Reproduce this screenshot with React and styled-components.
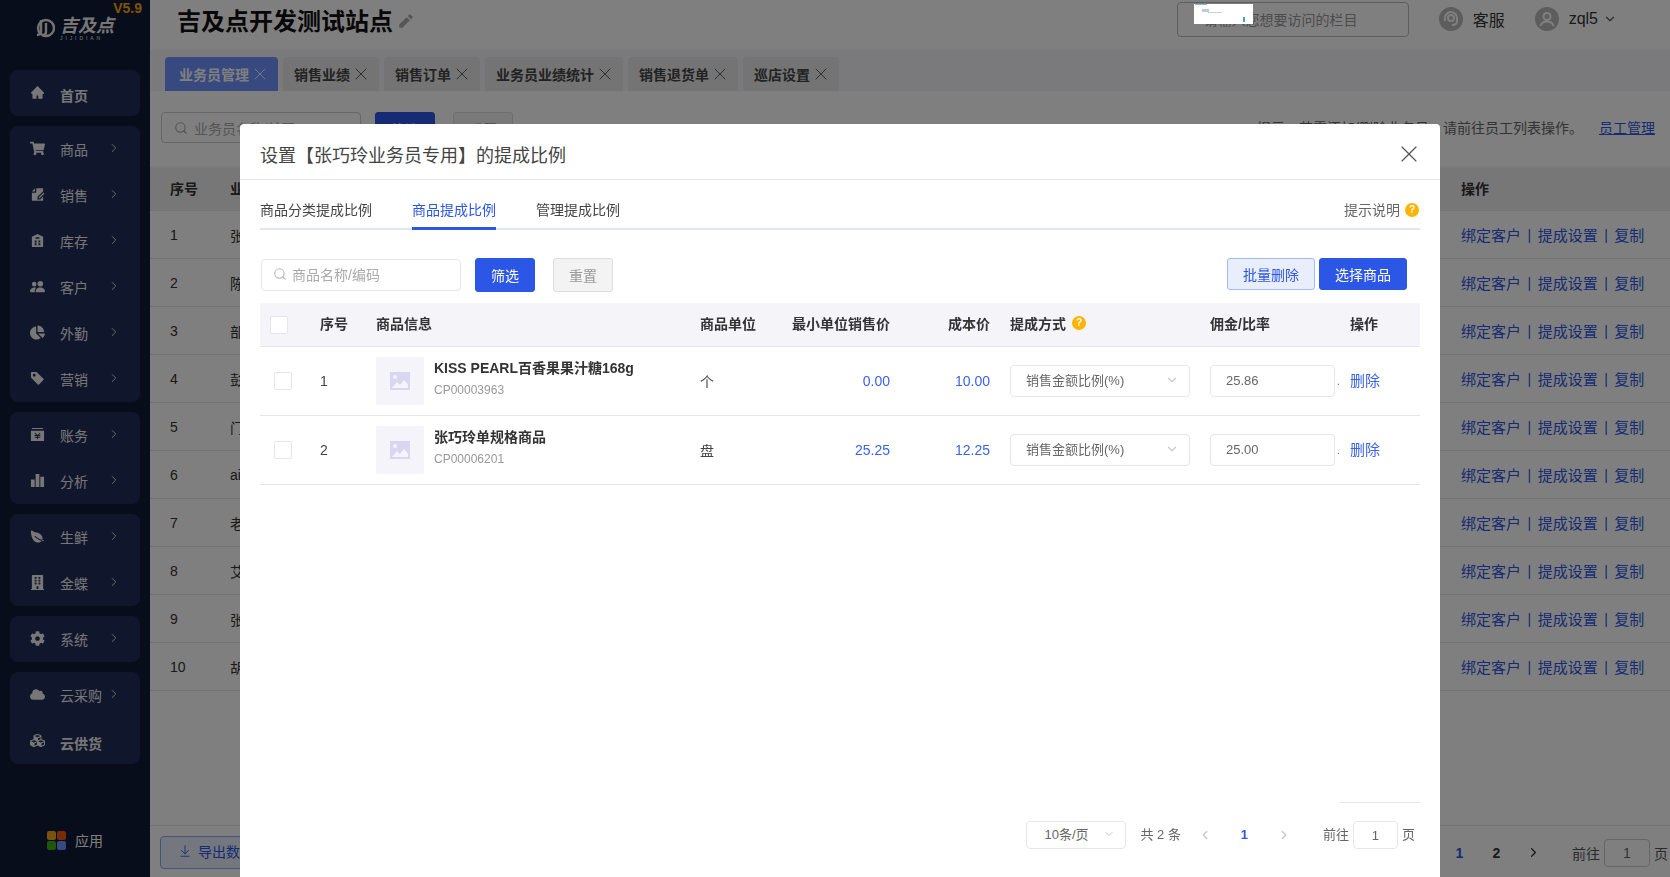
import React from 'react';
import styled, { createGlobalStyle } from 'styled-components';
import { AiFillHome } from 'react-icons/ai';
import { FaShoppingCart, FaChartPie, FaCog, FaCubes, FaCloud, FaBuilding } from 'react-icons/fa';
import { RiFileEditFill, RiPencilFill } from 'react-icons/ri';
import { BsPeopleFill, BsTagFill } from 'react-icons/bs';
import { IoLeaf } from 'react-icons/io5';
import { ChevronRight, ChevronLeft, ChevronDown, X, Search, ArrowDownToLine } from 'lucide-react';

const BLUE = '#2c56e6';
const LINE = '#e3e6ee';

const GlobalStyle = createGlobalStyle`
  html, body {
    margin: 0;
    padding: 0;
    height: 100%;
    overflow: hidden;
    background: #fff;
    font-family: "Liberation Sans", "Noto Sans CJK SC", sans-serif;
    font-size: 14px;
    color: #333;
  }
  * { box-sizing: border-box; }
`;

const Page = styled.div`
  display: flex;
  width: 1670px;
  height: 877px;
  overflow: hidden;
`;

/* sidebar */
const Sidebar = styled.aside`
  flex: none;
  width: 150px;
  display: flex;
  flex-flow: column;
  background: #0f1a34;
  padding: 0 10px;
`;

const Brand = styled.div`
  position: relative;
  height: 70px;
  display: flex;
  align-items: flex-start;
  padding: 18px 0 0 25px;
  gap: 5px;
`;

const Version = styled.span`
  position: absolute;
  top: 0;
  right: -2px;
  font-size: 14px;
  line-height: 16px;
  font-weight: 700;
  color: #ffa60f;
`;

const BrandName = styled.div`
  display: flex;
  flex-flow: column;
  color: #eee;
  font-size: 18px;
  line-height: 17px;
  font-weight: 700;
  font-style: italic;

  small {
    font-size: 5px;
    line-height: 6px;
    font-weight: 400;
    font-style: normal;
    letter-spacing: 2.9px;
  }
`;

const NavGroup = styled.nav`
  background: #202d59;
  border-radius: 8px;
  margin-bottom: 10px;
`;

const NavItem = styled.a`
  height: 46px;
  display: flex;
  align-items: center;
  padding-left: 20px;
  color: #eee;
  font-size: 14px;
  font-weight: ${({ $bold }) => ($bold ? 700 : 400)};

  > svg:first-child {
    flex: none;
    width: 15px;
    height: 15px;
    margin: -2px 15px 0 0;
    fill: #eee;
  }
`;

const NavLabel = styled.span`
  width: 47px;
  white-space: nowrap;
  margin-top: ${({ $bold }) => ($bold ? 3 : 0)}px;
`;

const NavChevron = styled(ChevronRight)`
  margin-top: -3px;
`;

const AppsEntry = styled.div`
  margin-top: auto;
  height: 68px;
  padding: 0 0 6px 37px;
  display: flex;
  align-items: center;
  gap: 9px;
  color: #fff;
`;

const AppsIcon = styled.div`
  display: grid;
  grid-template-columns: 9px 9px;
  gap: 1px;
`;

const AppsDot = styled.i`
  height: 9px;
  border-radius: 2px;
  background: ${({ $color }) => $color};
`;

/* page behind the dialog */
const Main = styled.main`
  flex: 1;
  min-width: 0;
  display: flex;
  flex-flow: column;
  background: #fff;
`;

const TopBar = styled.header`
  flex: none;
  height: 50px;
  display: flex;
  align-items: center;
  padding: 0 0 12px 27px;
`;

const SiteTitle = styled.h1`
  margin: 6px 4px 0 0;
  font-size: 24px;
  line-height: 30px;
  font-weight: 700;
  color: #111;
`;

const EditIcon = styled(RiPencilFill)`
  margin-top: 3px;
`;

const TopSearch = styled.div`
  margin-left: auto;
  width: 232px;
  height: 35px;
  padding-left: 26px;
  display: flex;
  align-items: center;
  border: 1px solid #bbb;
  border-radius: 4px;
  color: #999;
  font-size: 14px;
  white-space: nowrap;
`;

const TopLink = styled.div`
  display: flex;
  align-items: center;
  gap: 10px;
  margin-left: 30px;
  color: #333;
  font-size: 16px;
`;

const TopChevron = styled(ChevronDown)`
  margin: 0 53px 0 5px;
`;

const RoundIcon = styled.span`
  width: 24px;
  height: 24px;
  border-radius: 50%;
  background: #bbb;
  display: flex;
  align-items: center;
  justify-content: center;
`;

const TabStrip = styled.div`
  flex: none;
  height: 41px;
  padding: 7px 0 0 15px;
  display: flex;
  gap: 5px;
  background: #f4f4f8;
`;

const Tab = styled.div`
  height: 34px;
  padding: 0 8px 0 ${({ $active }) => ($active ? 14 : 11)}px;
  display: flex;
  align-items: center;
  gap: 1px;
  border-radius: 4px 4px 0 0;
  font-weight: 700;
  font-size: 14px;
  white-space: nowrap;
  background: ${({ $active }) => ($active ? '#6f93ff' : '#e8e8e8')};
  color: ${({ $active }) => ($active ? '#fff' : '#444')};
`;

const FilterBar = styled.div`
  flex: none;
  height: 76px;
  padding: 21px 15px 0 11px;
  display: flex;
  align-items: flex-start;
`;

const BackSearch = styled.div`
  width: 200px;
  height: 31px;
  margin-right: 14px;
  padding-left: 12px;
  display: flex;
  align-items: center;
  gap: 6px;
  border: 1px solid #ccc;
  border-radius: 4px;
  color: #aaa;
`;

const Notice = styled.div`
  margin: 5px 0 0 auto;
  color: #666;
  white-space: nowrap;
`;

const NoticeLink = styled.a`
  margin-left: 16px;
  color: ${BLUE};
  text-decoration: underline;
`;

const BackRow = styled.div`
  flex: none;
  height: ${({ $head }) => ($head ? 44 : 48)}px;
  padding: 0 23px ${({ $head }) => ($head ? 2 : 0)}px 20px;
  display: grid;
  grid-template-columns: 60px 1fr 186px;
  align-items: center;
  border-bottom: 1px solid #e6e6e6;
  background: ${({ $head }) => ($head ? '#eeeeef' : '#fff')};
  font-weight: ${({ $head }) => ($head ? 700 : 400)};
  font-size: 14px;
  color: #333;
`;

const BackLinks = styled.div`
  display: flex;
  align-items: center;
  color: ${BLUE};
  font-size: 15px;
  font-weight: 400;
  white-space: nowrap;
`;

const BackPipe = styled.span`
  margin: 0 6.500px;
  font-size: 14px;
`;

const BackFooter = styled.div`
  margin-top: auto;
  flex: none;
  height: 52px;
  border-top: 1px solid #e6e6e6;
  padding: 10px 2px 0 10px;
  display: flex;
  align-items: flex-start;
`;

const ExportButton = styled.div`
  width: 120px;
  height: 33px;
  padding: 0 0 3px 17px;
  display: flex;
  align-items: center;
  gap: 6px;
  border: 1px solid #8ba5f5;
  border-radius: 4px;
  background: #e9eefc;
  color: ${BLUE};
  white-space: nowrap;
`;

const BackPager = styled.div`
  margin-left: auto;
  display: flex;
  align-items: center;
  height: 33px;
  color: #555;
  font-size: 14px;
`;

const PagerNum = styled.b`
  width: 37px;
  text-align: center;
  color: ${({ $on }) => ($on ? BLUE : '#333')};
`;

const BackArrow = styled(ChevronRight)`
  margin: 0 31px 0 11px;
`;

/* dialog */
const Overlay = styled.div`
  position: fixed;
  inset: 0;
  background: rgba(0, 0, 0, 0.5);
`;

const Thumb = styled.div`
  position: fixed;
  left: 1194px;
  top: 4px;
  width: 59px;
  height: 20px;
  background:
    linear-gradient(#8ab4e8, #8ab4e8) 1px 0 / 12px 1px no-repeat,
    linear-gradient(#bcd, #bcd) 8px 5px / 7px 3px no-repeat,
    linear-gradient(#4a9, #4a9) 49px 13px / 2px 5px no-repeat,
    linear-gradient(#c9d0da, #c9d0da) 14px 8px / 14px 1px no-repeat,
    #fff;
`;

const Dialog = styled.section`
  position: fixed;
  left: 240px;
  top: 124px;
  bottom: 0;
  width: 1200px;
  display: flex;
  flex-flow: column;
  background: #fff;
  border-radius: 4px 4px 0 0;
`;

const DialogHead = styled.header`
  flex: none;
  height: 56px;
  padding: 0 17px 0 20px;
  display: flex;
  align-items: center;
  justify-content: space-between;
  border-bottom: 1px solid ${LINE};
`;

const DialogTitle = styled.h2`
  margin: 8px 0 0;
  font-size: 18px;
  line-height: 24px;
  font-weight: 400;
  color: #444;
`;

const DialogClose = styled(X)`
  margin-top: 4px;
`;

const DialogBody = styled.div`
  flex: 1;
  min-height: 0;
  padding: 0 20px;
  display: flex;
  flex-flow: column;
`;

const TabBar = styled.div`
  flex: none;
  height: 50px;
  display: flex;
  align-items: stretch;
  gap: 40px;
  border-bottom: 2px solid ${LINE};
`;

const TabItem = styled.div`
  padding-top: 20px;
  margin-bottom: -2px;
  font-size: 14px;
  line-height: 20px;
  color: ${({ $active }) => ($active ? BLUE : '#444')};
  border-bottom: 3px solid ${({ $active }) => ($active ? BLUE : 'transparent')};
`;

const TabHint = styled.div`
  margin-left: auto;
  padding: 20px 1px 0 0;
  display: flex;
  align-items: flex-start;
  gap: 5px;
  line-height: 20px;
  color: #666;
`;

const Help = styled.span`
  width: 14px;
  height: 14px;
  margin-top: ${({ $flat }) => ($flat ? 0 : 3)}px;
  border-radius: 50%;
  background: #ffb400;
  color: #fff;
  font-size: 10px;
  line-height: 14px;
  font-weight: 700;
  text-align: center;
`;

const Toolbar = styled.div`
  flex: none;
  height: 45px;
  margin-top: 28px;
  padding: 0 13px 0 1px;
  display: flex;
  align-items: flex-start;
`;

const SearchBox = styled.div`
  width: 200px;
  height: 32px;
  margin: 1px 14px 0 0;
  padding: 0 0 3px 11px;
  display: flex;
  align-items: center;
  gap: 5px;
  border: 1px solid ${LINE};
  border-radius: 4px;
  color: #aaa;
  font-size: 14px;
`;

const Button = styled.button`
  width: ${({ $w }) => $w}px;
  height: ${({ $h }) => $h || 34}px;
  margin-left: ${({ $ml }) => $ml || 0}px;
  padding: 0;
  border-radius: 3px;
  font: inherit;
  font-size: 14px;
  border: 1px solid ${({ $kind }) =>
    $kind === 'primary' ? BLUE : $kind === 'soft' ? '#a5b8f4' : '#ddd'};
  background: ${({ $kind }) =>
    $kind === 'primary' ? BLUE : $kind === 'soft' ? '#e9eefc' : '#f3f3f3'};
  color: ${({ $kind }) =>
    $kind === 'primary' ? '#fff' : $kind === 'soft' ? BLUE : '#999'};
`;

const PushedButton = styled(Button)`
  margin-left: auto;
`;

const Row = styled.div`
  flex: none;
  display: grid;
  grid-template-columns: 60px 56px 324px 70px 120px 100px 220px 140px 70px;
  align-items: center;
  height: ${({ $head }) => ($head ? 44 : 69)}px;
  padding-bottom: ${({ $head }) => ($head ? 4 : 0)}px;
  background: ${({ $head }) => ($head ? '#f4f4f9' : '#fff')};
  border-bottom: 1px solid ${LINE};
  font-weight: ${({ $head }) => ($head ? 700 : 400)};
  color: ${({ $head }) => ($head ? '#333' : '#444')};
`;

const Check = styled.span`
  display: block;
  width: 18px;
  height: 18px;
  margin: ${({ $head }) => ($head ? '4px 0 0 10px' : '0 0 0 14px')};
  border: 1px solid ${LINE};
  border-radius: 2px;
  background: #fff;
`;

const Money = styled.span`
  text-align: right;
  color: ${({ $plain }) => ($plain ? '#333' : '#3b63e8')};
`;

const ProductCell = styled.div`
  display: flex;
  align-items: center;
  gap: 10px;
`;

const ProductThumb = styled.div`
  flex: none;
  width: 48px;
  height: 48px;
  border-radius: 2px;
  background: #f5f4fb;
  display: flex;
  align-items: center;
  justify-content: center;
`;

const ProductText = styled.div`
  padding-bottom: 6px;
`;

const ProductName = styled.div`
  font-size: 14px;
  line-height: 20px;
  font-weight: 700;
  color: #333;
`;

const ProductCode = styled.div`
  margin-top: 4px;
  font-size: 12px;
  line-height: 16px;
  color: #999;
`;

const ModeCell = styled.div`
  display: flex;
  align-items: center;
  gap: 6px;
  padding-left: 20px;
`;

const SelectBox = styled.div`
  width: ${({ $w }) => $w}px;
  height: ${({ $h }) => $h || 32}px;
  padding: 0 10px 3px ${({ $pl }) => $pl || 15}px;
  display: flex;
  align-items: center;
  justify-content: space-between;
  border: 1px solid ${LINE};
  border-radius: 4px;
  background: #fff;
  color: #666;
  font-size: 13px;
`;

const RateCell = styled.div`
  display: flex;
  align-items: center;

  &::after {
    content: '.';
    margin: 0 0 0 2px;
    font-size: 10px;
    color: #666;
  }
`;

const RateInput = styled.div`
  width: 125px;
  height: 32px;
  padding: 0 0 1px 15px;
  display: flex;
  align-items: center;
  border: 1px solid ${LINE};
  border-radius: 4px;
  color: #666;
  font-size: 13px;
`;

const RemoveLink = styled.a`
  color: #3b63e8;
  font-size: 15px;
  line-height: 20px;
`;

const DialogFooter = styled.div`
  margin-top: auto;
  flex: none;
  height: 75px;
  position: relative;
  padding: 19px 5px 0 0;
  display: flex;
  align-items: flex-start;
  justify-content: flex-end;
  color: #666;
  font-size: 13px;

  &::before {
    content: '';
    position: absolute;
    top: 0;
    right: 0;
    width: 80px;
    border-top: 1px solid ${LINE};
  }
`;

const PagerText = styled.span`
  line-height: 28px;
  white-space: nowrap;
  margin: ${({ $m }) => $m || 0};
`;

const PageInput = styled.div`
  width: ${({ $w }) => $w || 45}px;
  height: 28px;
  margin: 0 4px;
  display: flex;
  align-items: center;
  justify-content: center;
  border: 1px solid ${({ $dim }) => ($dim ? '#ccc' : LINE)};
  border-radius: 4px;
  color: #666;
`;

const PagerArrow = styled.span`
  height: 28px;
  display: flex;
  align-items: center;
  color: #c4c8d4;
`;

const PagerActive = styled.b`
  width: 65px;
  line-height: 28px;
  text-align: center;
  color: ${BLUE};
`;

const StoreIcon = () => (
  <svg viewBox="0 0 16 16"><path d="M8 1 14 4v11H2V4zM5 8v2h2V8zm4 0v2h2V8zM5 11v2h2v-2zm4 0v2h2v-2zM6 4.5v1.5h4V4.500z" fillRule="evenodd" /></svg>
);
const LedgerIcon = () => (
  <svg viewBox="0 0 16 16"><path d="M2 1h12v1H2zM1 4h14v11H1zM5.500 6 8 8.500 10.500 6l.7.700-1.900 1.800h1.700v1H8.500v1H11v1H8.500v1.500h-1V11.500H5v-1h2.500v-1H5v-1h1.700L4.800 6.700z" fillRule="evenodd" /></svg>
);
const BarsIcon = () => (
  <svg viewBox="0 0 16 16"><path d="M1 7h4v8H1zM6 1h4v14H6zM11 4h4v11h-4z" /></svg>
);
const LogoMark = () => (
  <svg width="20" height="20" viewBox="0 0 20 20" fill="none" stroke="#e6e6e6" strokeWidth="2.400">
    <circle cx="11" cy="10" r="8" />
    <path d="M6 2v11c0 3-2 4-4 4M11 5v9c0 2-1 3-3 3" />
  </svg>
);
const PictureIcon = () => (
  <svg width="20" height="18" viewBox="0 0 20 18">
    <path fill="#d9d6f2" d="M0 0h20v18H0z" />
    <circle cx="5" cy="5" r="2" fill="#f5f4fb" />
    <path fill="#f5f4fb" d="M2 16 7 10l3 3 4-5 4 4.500V16z" />
  </svg>
);
const HeadsetIcon = () => (
  <svg width="18" height="18" viewBox="0 0 18 18" fill="none" stroke="#fff" strokeWidth="2">
    <path d="M3 11V8a6 6 0 0 1 12 0v3" />
    <circle cx="9" cy="8" r="3" />
    <path d="M15 11c0 3-2 4-5 4" />
  </svg>
);
const UserIcon = () => (
  <svg width="18" height="18" viewBox="0 0 18 18" fill="none" stroke="#fff" strokeWidth="2">
    <circle cx="9" cy="6.500" r="3.500" />
    <path d="M2.500 16c1-3.500 3.500-4.500 6.500-4.500s5.500 1 6.500 4.500" />
  </svg>
);

const navGroups = [
  [{ label: '首页', Icon: AiFillHome, bold: true, plain: true }],
  [
    { label: '商品', Icon: FaShoppingCart },
    { label: '销售', Icon: RiFileEditFill },
    { label: '库存', Icon: StoreIcon },
    { label: '客户', Icon: BsPeopleFill },
    { label: '外勤', Icon: FaChartPie },
    { label: '营销', Icon: BsTagFill }
  ],
  [
    { label: '账务', Icon: LedgerIcon },
    { label: '分析', Icon: BarsIcon }
  ],
  [
    { label: '生鲜', Icon: IoLeaf },
    { label: '金蝶', Icon: FaBuilding }
  ],
  [{ label: '系统', Icon: FaCog }],
  [
    { label: '云采购', Icon: FaCloud },
    { label: '云供货', Icon: FaCubes, bold: true, plain: true }
  ]
];

const appColors = ['#f5a623', '#f0590e', '#3fae12', '#6f93ff'];
const tabs = ['业务员管理', '销售业绩', '销售订单', '业务员业绩统计', '销售退货单', '巡店设置'];
const names = ['张巧玲', '陈', '部', '彭', '门', 'ai', '老', '艾', '张', '胡'];
const products = [
  { id: 1, name: 'KISS PEARL百香果果汁糖168g', code: 'CP00003963', unit: '个', price: '0.00', cost: '10.00', rate: '25.86' },
  { id: 2, name: '张巧玲单规格商品', code: 'CP00006201', unit: '盘', price: '25.25', cost: '12.25', rate: '25.00' }
];

export default function App () {
  return (
    <Page>
      <GlobalStyle />
      <Sidebar>
        <Brand>
          <LogoMark />
          <BrandName>吉及点<small>JIJIDIAN</small></BrandName>
          <Version>V5.9</Version>
        </Brand>
        {navGroups.map((items) => (
          <NavGroup key={items[0].label}>
            {items.map(({ label, Icon, bold, plain }) => (
              <NavItem key={label} $bold={bold}>
                <Icon />
                <NavLabel $bold={bold}>{label}</NavLabel>
                {!plain && <NavChevron size={14} strokeWidth={1.500} color="#eee" />}
              </NavItem>
            ))}
          </NavGroup>
        ))}
        <AppsEntry>
          <AppsIcon>
            {appColors.map((c) => <AppsDot key={c} $color={c} />)}
          </AppsIcon>
          应用
        </AppsEntry>
      </Sidebar>

      <Main>
        <TopBar>
          <SiteTitle>吉及点开发测试站点</SiteTitle>
          <EditIcon size={18} color="#aaa" />
          <TopSearch>请输入您想要访问的栏目</TopSearch>
          <TopLink><RoundIcon><HeadsetIcon /></RoundIcon>客服</TopLink>
          <TopLink>
            <RoundIcon><UserIcon /></RoundIcon>
            zql5
          </TopLink>
          <TopChevron size={14} color="#555" />
        </TopBar>
        <TabStrip>
          {tabs.map((tab, i) => (
            <Tab key={tab} $active={i === 0}>{tab}<X size={20} strokeWidth={1} /></Tab>
          ))}
        </TabStrip>
        <FilterBar>
          <BackSearch><Search size={14} />业务员名称/编码</BackSearch>
          <Button $kind="primary" $w={60}>筛选</Button>
          <Button $w={60} $ml={18}>重置</Button>
          <Notice>提示：若需添加/删除业务员，请前往员工列表操作。<NoticeLink>员工管理</NoticeLink></Notice>
        </FilterBar>
        <BackRow $head>
          <span>序号</span>
          <span>业务员</span>
          <span>操作</span>
        </BackRow>
        {names.map((name, i) => (
          <BackRow key={i}>
            <span>{i + 1}</span>
            <span>{name}</span>
            <BackLinks>绑定客户<BackPipe>|</BackPipe>提成设置<BackPipe>|</BackPipe>复制</BackLinks>
          </BackRow>
        ))}
        <BackFooter>
          <ExportButton><ArrowDownToLine size={14} strokeWidth={1.500} />导出数据</ExportButton>
          <BackPager>
            <PagerNum $on>1</PagerNum>
            <PagerNum>2</PagerNum>
            <BackArrow size={15} color="#333" />
            前往
            <PageInput $dim $w={46}>1</PageInput>
            页
          </BackPager>
        </BackFooter>
      </Main>

      <Overlay />
      <Thumb />

      <Dialog>
        <DialogHead>
          <DialogTitle>设置【张巧玲业务员专用】的提成比例</DialogTitle>
          <DialogClose size={28} strokeWidth={1} color="#555" />
        </DialogHead>
        <DialogBody>
          <TabBar>
            <TabItem>商品分类提成比例</TabItem>
            <TabItem $active>商品提成比例</TabItem>
            <TabItem>管理提成比例</TabItem>
            <TabHint>提示说明<Help>?</Help></TabHint>
          </TabBar>
          <Toolbar>
            <SearchBox><Search size={14} color="#bbb" />商品名称/编码</SearchBox>
            <Button $kind="primary" $w={60}>筛选</Button>
            <Button $w={60} $ml={18}>重置</Button>
            <PushedButton $kind="soft" $w={88} $h={32}>批量删除</PushedButton>
            <Button $kind="primary" $w={88} $h={32} $ml={4}>选择商品</Button>
          </Toolbar>
          <Row $head>
            <Check $head />
            <span>序号</span>
            <span>商品信息</span>
            <span>商品单位</span>
            <Money $plain>最小单位销售价</Money>
            <Money $plain>成本价</Money>
            <ModeCell>提成方式<Help $flat>?</Help></ModeCell>
            <span>佣金/比率</span>
            <span>操作</span>
          </Row>
          {products.map((p) => (
            <Row key={p.id}>
              <Check />
              <span>{p.id}</span>
              <ProductCell>
                <ProductThumb><PictureIcon /></ProductThumb>
                <ProductText>
                  <ProductName>{p.name}</ProductName>
                  <ProductCode>{p.code}</ProductCode>
                </ProductText>
              </ProductCell>
              <span>{p.unit}</span>
              <Money>{p.price}</Money>
              <Money>{p.cost}</Money>
              <ModeCell>
                <SelectBox $w={180}>销售金额比例(%)<ChevronDown size={14} color="#c4c8d4" /></SelectBox>
              </ModeCell>
              <RateCell><RateInput>{p.rate}</RateInput></RateCell>
              <RemoveLink>删除</RemoveLink>
            </Row>
          ))}
          <DialogFooter>
            <SelectBox $w={100} $h={28} $pl={18}>10条/页<ChevronDown size={12} color="#c4c8d4" /></SelectBox>
            <PagerText $m="0 17px 0 15px">共 2 条</PagerText>
            <PagerArrow><ChevronLeft size={14} strokeWidth={2.500} /></PagerArrow>
            <PagerActive>1</PagerActive>
            <PagerArrow><ChevronRight size={14} strokeWidth={2.500} /></PagerArrow>
            <PagerText $m="0 0 0 32px">前往</PagerText>
            <PageInput>1</PageInput>
            <PagerText>页</PagerText>
          </DialogFooter>
        </DialogBody>
      </Dialog>
    </Page>
  );
}
